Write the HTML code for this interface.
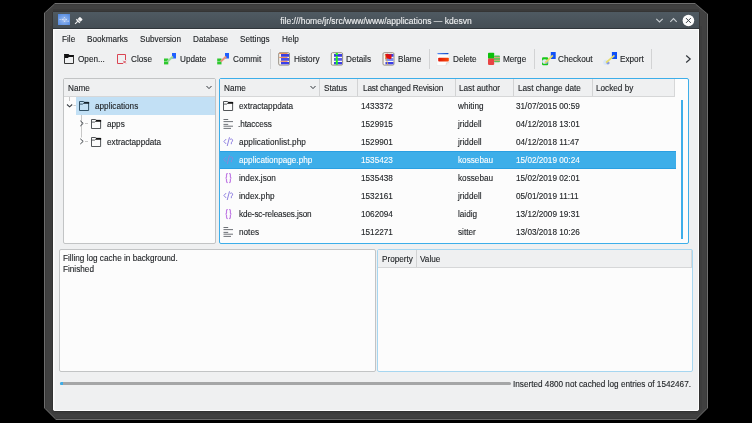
<!DOCTYPE html>
<html><head><meta charset="utf-8">
<style>
*{margin:0;padding:0;box-sizing:border-box}
html,body{width:752px;height:423px;overflow:hidden;background:#000}
body{position:relative;font-family:"Liberation Sans",sans-serif;font-size:8.2px;color:#222528}
.a{position:absolute}
.t{position:absolute;white-space:nowrap;line-height:18px;height:18px;margin-top:1px;will-change:transform;-webkit-text-stroke:0.12px currentColor}
#frameo{left:44px;top:3px;width:664px;height:417px;background:#6e6e6e;
 clip-path:polygon(11px 0,calc(100% - 13px) 0,100% 11px,100% calc(100% - 12px),calc(100% - 12px) 100%,12px 100%,0 calc(100% - 12px),0 10px)}
#framei{left:45px;top:4px;width:662px;height:415px;background:#404040;box-shadow:inset 0 0 0 1px #3a3a3a;
 clip-path:polygon(10px 0,calc(100% - 12px) 0,100% 10px,100% calc(100% - 11px),calc(100% - 11px) 100%,11px 100%,0 calc(100% - 11px),0 9px)}
#title{left:53px;top:12px;width:646px;height:17px;background:linear-gradient(#4f5a62,#454e55);border-bottom:1px solid #30363b;box-shadow:0 -1px #353535, 0 -3px #3a3a3a, -1px 0 #353535, 1px 0 #353535}
#content{left:53px;top:29px;width:646px;height:382px;background:#eff0f1;border-radius:0 0 3px 3px;border-top:1px solid #fafafa;box-shadow:0 0 0 1px #323232, 0 0 0 3px #3c3c3c, inset 1px 0 #fdfdfd, inset 2px 0 #f6f6f7, inset -1px 0 #fdfdfd, inset 0 -1px #fdfdfd}
.panel{position:absolute;background:#fcfcfc;border:1px solid #c2c4c5;border-radius:2px}
.focus{border-color:#3daee9}
.hdr{position:absolute;background:#eff0f1;border-bottom:1px solid #d6d7d8}
.sep{position:absolute;width:1px;background:#d2d3d4}
.tbsep{position:absolute;width:1px;top:49px;height:20px;background:#d2d3d4}
.row{position:absolute;height:18px}
.sel{background:#3daee9;color:#fcfcfc;box-shadow:inset 0 1px #2a9fe2,inset 0 -1px #2a9fe2}
</style></head><body>
<div id="frameo" class="a"></div>
<div id="framei" class="a"></div>
<div id="content" class="a"></div>
<div id="title" class="a"></div>
<div class="t" style="left:53px;width:646px;text-align:center;top:11px;color:#eff0f1;line-height:18px;font-size:8.5px">file:///home/jr/src/www/www/applications — kdesvn</div>

<!-- menu -->
<div class="t" style="left:62px;top:30px">File</div>
<div class="t" style="left:87px;top:30px">Bookmarks</div>
<div class="t" style="left:140px;top:30px">Subversion</div>
<div class="t" style="left:193px;top:30px">Database</div>
<div class="t" style="left:239.5px;top:30px">Settings</div>
<div class="t" style="left:282px;top:30px">Help</div>

<!-- toolbar -->
<div class="t" style="left:78px;top:50px">Open...</div>
<div class="t" style="left:130.5px;top:50px">Close</div>
<div class="t" style="left:179.5px;top:50px">Update</div>
<div class="t" style="left:232.5px;top:50px">Commit</div>
<div class="tbsep" style="left:270px"></div>
<div class="t" style="left:293.5px;top:50px">History</div>
<div class="t" style="left:345.5px;top:50px">Details</div>
<div class="t" style="left:397.5px;top:50px">Blame</div>
<div class="tbsep" style="left:429px"></div>
<div class="t" style="left:452.5px;top:50px">Delete</div>
<div class="t" style="left:503px;top:50px">Merge</div>
<div class="tbsep" style="left:534px"></div>
<div class="t" style="left:558px;top:50px">Checkout</div>
<div class="t" style="left:619.5px;top:50px">Export</div>
<div class="tbsep" style="left:651px"></div>

<!-- left tree panel -->
<div class="panel" style="left:63px;top:78px;width:153px;height:166px"></div>
<div class="hdr" style="left:64px;top:79px;width:151px;height:18px"></div>
<div class="t" style="left:68px;top:79px">Name</div>
<div class="a" style="left:76px;top:97px;width:139px;height:18px;background:#c2e0f5"></div>
<div class="t" style="left:94.5px;top:97px">applications</div>
<div class="t" style="left:106.5px;top:115px">apps</div>
<div class="t" style="left:106.5px;top:133px">extractappdata</div>

<!-- right file panel -->
<div class="panel focus" style="left:219px;top:78px;width:470px;height:166px"></div>
<div class="hdr" style="left:220px;top:79px;width:455px;height:18px;border-right:1px solid #d6d7d8"></div>
<div class="sep" style="left:319px;top:79px;height:17px"></div>
<div class="sep" style="left:357px;top:79px;height:17px"></div>
<div class="sep" style="left:455px;top:79px;height:17px"></div>
<div class="sep" style="left:513px;top:79px;height:17px"></div>
<div class="sep" style="left:592px;top:79px;height:17px"></div>

<div class="t" style="left:224px;top:79px">Name</div>
<div class="t" style="left:323.5px;top:79px">Status</div>
<div class="t" style="left:362.5px;top:79px;letter-spacing:-0.13px">Last changed Revision</div>
<div class="t" style="left:459px;top:79px">Last author</div>
<div class="t" style="left:518px;top:79px">Last change date</div>
<div class="t" style="left:596px;top:79px">Locked by</div>
<div class="a" style="left:681px;top:100px;width:2px;height:139px;background:#3daee9"></div>

<div class="row sel" style="left:220px;top:151px;width:456px"></div>
<svg class="a" style="left:223px;top:101px" width="11" height="11" viewBox="0 0 11 11"><path d="M0.5 9.5V0.5H4.7L5.7 1.3H9.6V9.5Z" fill="none" stroke="#4a4d50" stroke-width="0.95"/><path d="M4 2.7L5.3 1H10.1V2.7Z" fill="#111"/><path d="M0.6 3.1H3.6L4.6 2.3" fill="none" stroke="#4a4d50" stroke-width="0.9"/></svg><svg class="a" style="left:79px;top:101px" width="11" height="11" viewBox="0 0 11 11"><path d="M0.5 9.5V0.5H4.7L5.7 1.3H9.6V9.5Z" fill="none" stroke="#2a4a5e" stroke-width="0.95"/><path d="M4 2.7L5.3 1H10.1V2.7Z" fill="#12202a"/><path d="M0.6 3.1H3.6L4.6 2.3" fill="none" stroke="#2a4a5e" stroke-width="0.9"/></svg><svg class="a" style="left:91px;top:119px" width="11" height="11" viewBox="0 0 11 11"><path d="M0.5 9.5V0.5H4.7L5.7 1.3H9.6V9.5Z" fill="none" stroke="#4a4d50" stroke-width="0.95"/><path d="M4 2.7L5.3 1H10.1V2.7Z" fill="#111"/><path d="M0.6 3.1H3.6L4.6 2.3" fill="none" stroke="#4a4d50" stroke-width="0.9"/></svg><svg class="a" style="left:91px;top:137px" width="11" height="11" viewBox="0 0 11 11"><path d="M0.5 9.5V0.5H4.7L5.7 1.3H9.6V9.5Z" fill="none" stroke="#4a4d50" stroke-width="0.95"/><path d="M4 2.7L5.3 1H10.1V2.7Z" fill="#111"/><path d="M0.6 3.1H3.6L4.6 2.3" fill="none" stroke="#4a4d50" stroke-width="0.9"/></svg><svg class="a" style="left:223px;top:119px" width="11" height="11" viewBox="0 0 11 11"><path d="M0.5 0.5H5.2 M0.5 2.6H10 M0.5 5.4H5.2 M0.5 7.2H10 M0.5 9.4H8" stroke="#5e6268" stroke-width="0.9"/></svg><svg class="a" style="left:223px;top:137px" width="11" height="11" viewBox="0 0 11 11"><path d="M3.1 2.1L0.9 4.5L3.1 6.9M6.5 0.3L4.2 9M7 2.7Q7.6 1.9 8.7 2Q9.9 2.4 9.6 3.9Q9.3 4.8 8.4 5.3L8.3 7.2" fill="none" stroke="#8f7fe0" stroke-width="1"/></svg><svg class="a" style="left:223px;top:155px" width="11" height="11" viewBox="0 0 11 11"><path d="M3.1 2.1L0.9 4.5L3.1 6.9M6.5 0.3L4.2 9M7 2.7Q7.6 1.9 8.7 2Q9.9 2.4 9.6 3.9Q9.3 4.8 8.4 5.3L8.3 7.2" fill="none" stroke="#8a88d8" stroke-width="1"/></svg><svg class="a" style="left:223px;top:173px" width="11" height="11" viewBox="0 0 11 11"><path d="M4.8 0.4Q3.5 0.4 3.5 1.8V4Q3.5 4.9 2.5 5Q3.5 5.1 3.5 6V8.2Q3.5 9.6 4.8 9.6M6.1 0.4Q7.4 0.4 7.4 1.8V4Q7.4 4.9 8.4 5Q7.4 5.1 7.4 6V8.2Q7.4 9.6 6.1 9.6" fill="none" stroke="#c07ae4" stroke-width="1.15"/></svg><svg class="a" style="left:223px;top:191px" width="11" height="11" viewBox="0 0 11 11"><path d="M3.1 2.1L0.9 4.5L3.1 6.9M6.5 0.3L4.2 9M7 2.7Q7.6 1.9 8.7 2Q9.9 2.4 9.6 3.9Q9.3 4.8 8.4 5.3L8.3 7.2" fill="none" stroke="#8f7fe0" stroke-width="1"/></svg><svg class="a" style="left:223px;top:209px" width="11" height="11" viewBox="0 0 11 11"><path d="M4.8 0.4Q3.5 0.4 3.5 1.8V4Q3.5 4.9 2.5 5Q3.5 5.1 3.5 6V8.2Q3.5 9.6 4.8 9.6M6.1 0.4Q7.4 0.4 7.4 1.8V4Q7.4 4.9 8.4 5Q7.4 5.1 7.4 6V8.2Q7.4 9.6 6.1 9.6" fill="none" stroke="#c07ae4" stroke-width="1.15"/></svg><svg class="a" style="left:223px;top:227px" width="11" height="11" viewBox="0 0 11 11"><path d="M0.5 0.5H5.2 M0.5 2.6H10 M0.5 5.4H5.2 M0.5 7.2H10 M0.5 9.4H8" stroke="#5e6268" stroke-width="0.9"/></svg>
<div class="t" style="left:239px;top:97px">extractappdata</div><div class="t" style="left:361px;top:97px">1433372</div><div class="t" style="left:457.5px;top:97px">whiting</div><div class="t" style="left:516px;top:97px">31/07/2015 00:59</div>
<div class="t" style="left:238px;top:115px;letter-spacing:-0.08px">.htaccess</div><div class="t" style="left:361px;top:115px">1529915</div><div class="t" style="left:457.5px;top:115px">jriddell</div><div class="t" style="left:516px;top:115px">04/12/2018 13:01</div>
<div class="t" style="left:239px;top:133px;letter-spacing:0.1px">applicationlist.php</div><div class="t" style="left:361px;top:133px">1529901</div><div class="t" style="left:457.5px;top:133px">jriddell</div><div class="t" style="left:516px;top:133px">04/12/2018 11:47</div>
<div class="t" style="left:239px;top:151px;color:#fcfcfc">applicationpage.php</div><div class="t" style="left:361px;top:151px;color:#fcfcfc">1535423</div><div class="t" style="left:457.5px;top:151px;color:#fcfcfc">kossebau</div><div class="t" style="left:516px;top:151px;color:#fcfcfc">15/02/2019 00:24</div>
<div class="t" style="left:239px;top:169px">index.json</div><div class="t" style="left:361px;top:169px">1535438</div><div class="t" style="left:457.5px;top:169px">kossebau</div><div class="t" style="left:516px;top:169px">15/02/2019 02:01</div>
<div class="t" style="left:239px;top:187px">index.php</div><div class="t" style="left:361px;top:187px">1532161</div><div class="t" style="left:457.5px;top:187px">jriddell</div><div class="t" style="left:516px;top:187px">05/01/2019 11:11</div>
<div class="t" style="left:239px;top:205px;letter-spacing:-0.13px">kde-sc-releases.json</div><div class="t" style="left:361px;top:205px">1062094</div><div class="t" style="left:457.5px;top:205px">laidig</div><div class="t" style="left:516px;top:205px">13/12/2009 19:31</div>
<div class="t" style="left:239px;top:223px">notes</div><div class="t" style="left:361px;top:223px">1512271</div><div class="t" style="left:457.5px;top:223px">sitter</div><div class="t" style="left:516px;top:223px">13/03/2018 10:26</div>

<!-- lower left log panel -->
<div class="panel" style="left:59px;top:249px;width:317px;height:123px"></div>
<div class="t" style="left:62.5px;top:249px;line-height:17px">Filling log cache in background.</div>
<div class="t" style="left:62.5px;top:260px;line-height:17px">Finished</div>

<!-- lower right property panel -->
<div class="panel focus" style="left:377px;top:249px;width:316px;height:122.5px;border-color:#a6d6f0"></div>
<div class="hdr" style="left:378px;top:250px;width:314px;height:18px;border-right:1px solid #d6d7d8"></div>
<div class="sep" style="left:416px;top:250px;height:17px"></div>
<div class="t" style="left:382px;top:250px;line-height:17px">Property</div>
<div class="t" style="left:420px;top:250px;line-height:17px">Value</div>

<!-- status / progress -->
<div class="a" style="left:60px;top:381.5px;width:451px;height:3.5px;background:#a5a6a7;border-radius:2px"></div>
<div class="a" style="left:60px;top:381.5px;width:2.5px;height:3.5px;background:#3daee9;border-radius:2px 0 0 2px"></div>
<div class="t" style="left:513px;top:375px">Inserted 4800 not cached log entries of 1542467.</div>

<!-- ICONS -->
<svg class="a" style="left:0;top:0" width="752" height="423" viewBox="0 0 752 423">
 <defs>
  <radialGradient id="gApp" cx="0.5" cy="0.55" r="0.7"><stop offset="0" stop-color="#9cbcf0"/><stop offset="0.6" stop-color="#6d9ce6"/><stop offset="1" stop-color="#4f86de"/></radialGradient>
  <linearGradient id="gBook" x1="0" y1="0" x2="1" y2="0"><stop offset="0" stop-color="#3846d8"/><stop offset="1" stop-color="#5a66f0"/></linearGradient>
 <linearGradient id="gDelB" x1="0" y1="0" x2="1" y2="0"><stop offset="0" stop-color="#5a8af0"/><stop offset="1" stop-color="#0a48c8"/></linearGradient>
  <linearGradient id="gDelR" x1="0" y1="0" x2="1" y2="0"><stop offset="0" stop-color="#e01808"/><stop offset="1" stop-color="#f84808"/></linearGradient>
 </defs>
 <!-- app icon -->
 <rect x="58" y="14" width="12" height="11" fill="url(#gApp)"/>
 <g fill="#e8eef8" opacity="0.75"><circle cx="60" cy="19.5" r="0.6"/><circle cx="62.8" cy="19.5" r="0.7"/><circle cx="64.4" cy="17.5" r="0.6"/><circle cx="66.3" cy="19.5" r="0.7"/><circle cx="64.5" cy="21.3" r="0.7"/><circle cx="68.3" cy="21.2" r="0.6"/></g><path d="M60 19.5H66.3M64.4 17.5L62.8 19.5L64.5 21.3L66.3 19.5L64.4 17.5M64.5 21.3L68.3 21.2" stroke="#e8eef8" stroke-width="0.4" opacity="0.6" fill="none"/>
 <!-- pin -->
 <rect x="78.2" y="17.6" width="4" height="3.2" rx="0.7" transform="rotate(45 80.2 19.2)" fill="#f6f6f6"/>
 <path d="M76.4 19.3 L79.8 22.7" stroke="#f6f6f6" stroke-width="1.4"/>
 <path d="M77.9 21.1 L75.1 23.9" stroke="#f0f0f0" stroke-width="1.1"/>
 <!-- title buttons -->
 <path d="M656.3 18.8 L659.5 22 L662.7 18.8" fill="none" stroke="#c8cdd1" stroke-width="1.1"/>
 <path d="M670.3 21.8 L673.5 18.6 L676.7 21.8" fill="none" stroke="#c8cdd1" stroke-width="1.1"/>
 <circle cx="688.4" cy="20.5" r="5.8" fill="#fcfcfc"/>
 <path d="M686 18.1 L690.8 22.9 M690.8 18.1 L686 22.9" stroke="#3a4249" stroke-width="1"/>

 <!-- Open -->
 <path d="M64 54 H68.5 L69.5 55.1 H74 V56.9 H68.9 L67.9 58 H64 Z" fill="#111"/>
 <path d="M64.5 54.5 V63.5 H73.5 V55.5" fill="none" stroke="#2a2a2a" stroke-width="0.95"/>
 <!-- Close -->
 <path d="M123 63.5 H117.5 V54.5 H125.5 V60" fill="none" stroke="#da4453" stroke-width="1"/>
 <path d="M123.3 60.8 L125.8 63.3 M125.8 60.8 L123.3 63.3" stroke="#da4453" stroke-width="1"/>
 <!-- Update -->
 <rect x="172" y="53" width="4" height="5.5" fill="#1f5fff"/>
 <rect x="164" y="58.5" width="4.3" height="2.8" fill="#2ec82e"/>
 <rect x="164" y="61.6" width="4.3" height="2.8" fill="#2ec82e"/>
 <path d="M167.5 61.5 L173 56.5" stroke="#9ad89a" stroke-width="2"/>
 <!-- Commit -->
 <rect x="225" y="53" width="4" height="5.5" fill="#1f5fff"/>
 <rect x="217.2" y="58.5" width="4.3" height="2.8" fill="#2ec82e"/>
 <rect x="217.2" y="61.6" width="4.3" height="2.8" fill="#2ec82e"/>
 <path d="M220.7 61.5 L226.2 56.5" stroke="#e8907e" stroke-width="2"/>
 <!-- History -->
 <rect x="278.7" y="52.7" width="10.8" height="12.4" rx="1.2" fill="#fbf8f2" stroke="#8c8478" stroke-width="0.9"/>
 <rect x="281" y="54" width="8" height="2.8" fill="#3a3ee0"/>
 <rect x="281" y="58" width="8" height="2.8" fill="#4a4ee8"/>
 <rect x="281" y="62" width="8" height="2.3" fill="#3a3ee8"/>
 <path d="M279.3 53.4 H287.5 M279.3 57.4 H287.5 M280.5 61.3 H287.5" stroke="#f07838" stroke-width="0.9"/>
 <!-- Details -->
 <rect x="331.3" y="52.7" width="11.3" height="12.4" rx="1.2" fill="#fbf8f2" stroke="#8c8478" stroke-width="0.9"/>
 <rect x="334" y="54" width="8" height="2.8" fill="#3a3ee0"/>
 <rect x="334" y="58" width="8" height="2.8" fill="#5a5ee8"/>
 <rect x="334" y="62" width="8" height="2.3" fill="#3a3ee8"/>
 <path d="M336.8 56 V64.7" stroke="#20f020" stroke-width="2"/>
 <circle cx="336.8" cy="53.9" r="1.2" fill="#20f020"/>
 <!-- Blame -->
 <rect x="383" y="52.7" width="11" height="12.4" rx="1.2" fill="#fbf8f2" stroke="#8c8478" stroke-width="0.9"/>
 <rect x="385.5" y="54" width="8" height="2.8" fill="#3a3ee0"/>
 <rect x="385.5" y="58" width="8" height="3" fill="#7a8ef0"/>
 <rect x="385.5" y="62" width="8" height="2.3" fill="#3a3ee8"/>
 <path d="M385 54.5 Q387 53.3 389 54.2 Q390.5 54.8 391.5 53.8 L391.5 58.5 Q390 59.8 388.5 58.8 Q386.8 58 385.6 59.3 Z" fill="#e01010"/>
 <path d="M385 54.6 L388 65" stroke="#e0b050" stroke-width="0.9"/>
 <!-- Delete -->
 <path d="M436.8 52.8 H449 V62.5 L446 65.5 H436.8 Z" fill="#fdfdfd" stroke="#e4e6e8" stroke-width="0.6"/>
 <path d="M446 65.5 L446.5 62.8 L449 62.5" fill="#e8eaec" stroke="#c8cacc" stroke-width="0.5"/>
 <rect x="437.3" y="52.9" width="11.3" height="1.3" rx="0.6" fill="url(#gDelB)"/>
 <rect x="438.2" y="57.8" width="10.6" height="3.8" rx="0.8" fill="url(#gDelR)"/>
 <!-- Merge -->
 <rect x="488" y="52.7" width="6.2" height="6" rx="0.8" fill="#0cc00c"/>
 <rect x="488" y="58.6" width="6.2" height="6.3" rx="0.8" fill="#e84444"/>
 <rect x="494" y="55.4" width="6" height="6.8" rx="1" fill="#58c458"/>
 <path d="M494 57.6 H500 M494 60.3 H500" stroke="#f2a488" stroke-width="0.9"/>
 <!-- Checkout -->
 <rect x="542" y="57.3" width="6.2" height="8" rx="1.2" fill="#18c818"/>
 <ellipse cx="544.8" cy="61.5" rx="2.6" ry="2.3" fill="#dce8f8"/>
 <ellipse cx="546.5" cy="62.5" rx="1.5" ry="1.3" fill="#8a9ae0"/>
 <rect x="550.8" y="52" width="4.9" height="7" fill="#1050f8"/>
 <path d="M545 62.8 L552.9 55.4" stroke="#e6dc68" stroke-width="1.8"/>
 <!-- Export -->
 <rect x="611.9" y="52" width="5.1" height="7" fill="#1050f8"/>
 <ellipse cx="606" cy="62.3" rx="2.8" ry="2.6" fill="#d8e6fa"/>
 <ellipse cx="608" cy="63" rx="1.6" ry="1.4" fill="#8a9ae0"/>
 <path d="M606 62.6 L614.5 55.4" stroke="#e6dc68" stroke-width="1.8"/>
 <!-- toolbar overflow -->
 <path d="M686.2 55.5 L690.2 59 L686.2 62.5" fill="none" stroke="#31363b" stroke-width="1.2"/>

 <!-- left header chevron -->
 <path d="M206.5 86 L209 88.6 L211.5 86" fill="none" stroke="#31363b" stroke-width="1"/>
 <!-- right header chevron -->
 <path d="M310.5 86 L313 88.6 L315.5 86" fill="none" stroke="#31363b" stroke-width="1"/>

 <!-- tree -->
 <path d="M69.5 97 V101" stroke="#c8c8c8" stroke-width="1"/>
 <path d="M67 104.5 L69.6 106.8 L72.2 104.5" fill="none" stroke="#3a3f44" stroke-width="1.1"/>
 <path d="M73.5 105.5 H75.8" stroke="#c8c8c8" stroke-width="1"/>
 <path d="M81.5 115 V137.5" stroke="#c8c8c8" stroke-width="1"/>
 <path d="M80.3 120.8 L83.2 123.4 L80.3 126" fill="none" stroke="#3e4348" stroke-width="1"/>
 <path d="M80.3 138.8 L83.2 141.4 L80.3 144" fill="none" stroke="#3e4348" stroke-width="1"/>
 <path d="M85 123.5 H88 M85 141.5 H88" stroke="#c8c8c8" stroke-width="1"/>
</svg>
</body></html>
